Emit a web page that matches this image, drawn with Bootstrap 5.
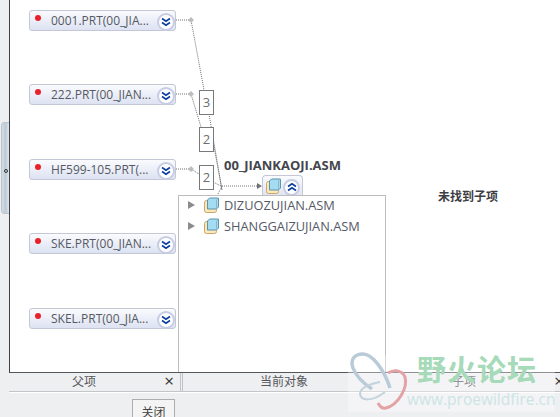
<!DOCTYPE html>
<html lang="zh">
<head>
    <title>参考查看器</title>
    <meta charset="UTF-8">
    <meta name="viewport" content="width=device-width, initial-scale=1.0">
    <link href="https://cdn.jsdelivr.net/npm/bootstrap@5.3.2/dist/css/bootstrap.min.css" rel="stylesheet">
    <style>
        html, body { height: 100%; }
        body {
            background: #eeeff1;
            color: #4b4f58;
            font: 12px/16px "Open Sans", "Noto Sans CJK SC", sans-serif;
            overflow: hidden;
            width: 560px;
            height: 417px;
        }
        .app-shell { width: 560px; height: 417px; }
        .side-strip { width: 9px; flex: none; position: relative; }
        .side-handle {
            position: absolute; left: 1px; top: 122px; width: 8px; height: 92px;
            background: linear-gradient(90deg, #d5dde3, #bccbd8 50%, #dfe6ec);
            border: 1px solid #b8c4ce; border-right: 0; border-radius: 4px 0 0 4px;
        }
        .side-handle::after {
            content: ""; position: absolute; left: 2px; top: 46px; width: 4px; height: 4px;
            border: 1px solid #333; border-radius: 50%;
        }
        .work-area { flex: 1; min-width: 0; }
        .graph-canvas {
            position: relative; height: 373px; background: #fff;
            border-left: 1px solid #3f4146; border-bottom: 1px solid #55575b; overflow: hidden;
        }
        .wire-layer { position: absolute; left: -10px; top: 0; width: 560px; height: 373px; }
        .part-node {
            position: absolute; left: 19px; width: 147px; height: 21px;
            background: linear-gradient(#fafbfe, #dde2f2);
            border: 1px solid #c3c7d6; border-radius: 3px;
            padding-left: 21px; line-height: 19px; white-space: nowrap; color: #555962;
        }
        .part-dot {
            position: absolute; left: 5px; top: 4px; width: 6px; height: 6px;
            background: #e8202a; border-radius: 50%;
        }
        .expand-btn {
            position: absolute; right: 0; top: 2px; width: 18px; height: 18px;
            background: #fff; border: 2px solid #c7cce3; border-radius: 50%;
        }
        .expand-btn svg { position: absolute; left: 2px; top: 2px; }
        .count-box {
            position: absolute; left: 189px; width: 15px; height: 25px;
            background: #fff; border: 1px solid #77797e;
            text-align: center; line-height: 23px; font-size: 13px; color: #6a6c72;
        }
        .asm-title {
            position: absolute; left: 214px; top: 157px; font-size: 13px;
            font-weight: 700; color: #44464c; white-space: nowrap;
        }
        .root-tab {
            position: absolute; left: 252px; top: 175px; width: 41px; height: 21px;
            background: linear-gradient(#fafbfe, #dfe4f3);
            border: 1px solid #c3c7d6; border-bottom: 0; border-radius: 4px 4px 0 0;
        }
        .root-tab .cube-icon { position: absolute; left: 2px; top: 2px; }
        .root-tab .expand-btn { right: 2px; top: 3px; width: 17px; height: 17px; }
        .root-tab .expand-btn svg { left: 1.5px; top: 1px; }
        .tree-box {
            position: absolute; left: 168px; top: 195px; width: 208px; height: 180px;
            background: #fff; border: 1px solid #bdbdbd;
        }
        .tree-row { height: 21px; padding-left: 9px; white-space: nowrap; color: #555966; font-size: 12.8px; }
        .tree-row:first-child { margin-top: -2px; }
        .tree-arrow {
            width: 0; height: 0; margin-right: 8px;
            border-left: 7px solid #8b8b8b; border-top: 4px solid transparent; border-bottom: 4px solid transparent;
        }
        .cube-icon { flex: none; margin-right: 5px; }
        .empty-note {
            position: absolute; left: 428px; top: 189px;
            font-weight: 700; color: #3c3e44; white-space: nowrap;
        }
        .pane-tabs { height: 18px; line-height: 18px; border-bottom: 1px solid #c4c5c8; box-sizing: content-box; }
        .pane-tab { position: relative; text-align: center; color: #55575c; }
        .tab-parent { width: 171px; padding-right: 21px; }
        .tab-current { width: 205px; border-left: 3px double #c2c3c6; }
        .tab-child { flex: 1; padding-right: 17px; }
        .pane-close { position: absolute; top: 0; font-size: 17px; color: #333; line-height: 16px; }
        .tab-parent .pane-close { right: 6px; }
        .tab-child .pane-close { right: -4px; }
        .pane-rule { height: 1px; background: #fff; }
        .close-btn {
            position: absolute; left: 132px; top: 399px; width: 43px; height: 26px;
            padding: 2px 0 0; font-size: 12px; line-height: 16px; border-radius: 0;
            background: #f4f4f5; border: 1px solid #adadad; color: #444;
        }
        .wild-mark {
            position: absolute; left: 348px; top: 355px; width: 207px; height: 57px;
            background: rgba(255, 255, 255, .35); pointer-events: none;
        }
        .wild-logo { position: absolute; left: 0; top: 0; overflow: visible; }
        .wild-name {
            position: absolute; left: 69px; top: -3px; white-space: nowrap;
            font: 700 29px/32px "Noto Sans CJK SC", sans-serif; letter-spacing: 1px; color: #a6dab8;
        }
        .wild-url {
            position: absolute; left: 59px; top: 34px; white-space: nowrap;
            font: 15.5px/20px "Open Sans", sans-serif; color: #cbe4e3;
        }
    </style>
</head>
<body>
<svg width="0" height="0" class="position-absolute">
    <symbol id="chev-down" viewBox="0 0 10 10">
        <path d="M1 1.500 5 4.200 9 1.500M1 5.500 5 8.200 9 5.500" fill="none" stroke="#0c3f9e" stroke-width="1.700"/>
    </symbol>
    <symbol id="chev-up" viewBox="0 0 10 10">
        <path d="M1 4.500 5 1.800 9 4.500M1 8.500 5 5.800 9 8.500" fill="none" stroke="#0c3f9e" stroke-width="1.700"/>
    </symbol>
    <symbol id="cube" viewBox="0 0 16 16">
        <rect x="1.500" y="3.500" width="12" height="12" rx="2" fill="#fbe7b8" stroke="#c9a76a"/>
        <path d="M4.500 3 6.500 1H15.500V10L13.500 12H4.500Z" fill="#a4dcf2" stroke="#5c93ad"/>
        <path d="M13.500 3V12M13.500 3 15.500 1" fill="none" stroke="#86b8cf"/>
    </symbol>
</svg>
<div class="app-shell d-flex">
    <div class="side-strip"><div class="side-handle"></div></div>
    <div class="work-area d-flex flex-column">
        <div class="graph-canvas">
            <svg class="wire-layer" viewBox="0 0 560 373">
                <g fill="none" stroke="#6f7176" stroke-dasharray="1 1">
                    <path d="M176 20H191L204 90M209 114 222 190"/>
                    <path d="M176 94H191L201 127M213 141 222 190"/>
                    <path d="M176 169H191L199 174M213 182 221 186H258"/>
                    <path d="M222 186 217 196"/>
                </g>
                <path d="M191 17 194 20 191 23 188 20ZM191 91 194 94 191 97 188 94ZM191 166 194 169 191 172 188 169Z" fill="#bdbdbd"/>
                <path d="M257 183 262 186 257 189Z" fill="#6f7176"/>
            </svg>

            <div class="part-node" style="top:10px"><span class="part-dot"></span>0001.PRT(00_JIA...<span class="expand-btn"><svg width="10" height="10"><use href="#chev-down"/></svg></span></div>
            <div class="part-node" style="top:84px"><span class="part-dot"></span>222.PRT(00_JIAN...<span class="expand-btn"><svg width="10" height="10"><use href="#chev-down"/></svg></span></div>
            <div class="part-node" style="top:159px"><span class="part-dot"></span>HF599-105.PRT(...<span class="expand-btn"><svg width="10" height="10"><use href="#chev-down"/></svg></span></div>
            <div class="part-node" style="top:233px"><span class="part-dot"></span>SKE.PRT(00_JIAN...<span class="expand-btn"><svg width="10" height="10"><use href="#chev-down"/></svg></span></div>
            <div class="part-node" style="top:308px"><span class="part-dot"></span>SKEL.PRT(00_JIA...<span class="expand-btn"><svg width="10" height="10"><use href="#chev-down"/></svg></span></div>

            <div class="count-box" style="top:90px">3</div>
            <div class="count-box" style="top:127px">2</div>
            <div class="count-box" style="top:165px">2</div>

            <div class="asm-title">00_JIANKAOJI.ASM</div>
            <div class="root-tab">
                <svg class="cube-icon" width="16" height="16"><use href="#cube"/></svg>
                <span class="expand-btn"><svg width="10" height="10"><use href="#chev-up"/></svg></span>
            </div>
            <div class="tree-box">
                <div class="tree-row d-flex align-items-center"><span class="tree-arrow"></span><svg class="cube-icon" width="16" height="16"><use href="#cube"/></svg>DIZUOZUJIAN.ASM</div>
                <div class="tree-row d-flex align-items-center"><span class="tree-arrow"></span><svg class="cube-icon" width="16" height="16"><use href="#cube"/></svg>SHANGGAIZUJIAN.ASM</div>
            </div>
            <div class="empty-note">未找到子项</div>
        </div>
        <div class="pane-tabs d-flex">
            <div class="pane-tab tab-parent">父项<span class="pane-close">×</span></div>
            <div class="pane-tab tab-current">当前对象</div>
            <div class="pane-tab tab-child">子项<span class="pane-close">×</span></div>
        </div>
        <div class="pane-rule"></div>
    </div>
</div>
<button type="button" class="btn close-btn">关闭</button>
<div class="wild-mark">
    <svg class="wild-logo" width="60" height="57" viewBox="0 0 60 57" fill="none">
        <path d="M42 33C36 14 24-1 15-1 6-1 2 5 5 13 8 21 15 28 24 34" stroke="#b9cbd8" stroke-width="3.500"/>
        <path d="M40 18C46 14 54 15 57 22 60 33 50 50 38 53 34 54 32 52 30 48" stroke="#e3a3a5" stroke-width="3"/>
        <path d="M32 27C22 29 12 33 12 39 13 46 24 47 37 37" stroke="#c3d2dc" stroke-width="2"/>
    </svg>
    <div class="wild-name">野火论坛</div>
    <div class="wild-url">www.proewildfire.cn</div>
</div>
<script src="https://cdn.jsdelivr.net/npm/bootstrap@5.3.2/dist/js/bootstrap.bundle.min.js"></script>
</body>
</html>
